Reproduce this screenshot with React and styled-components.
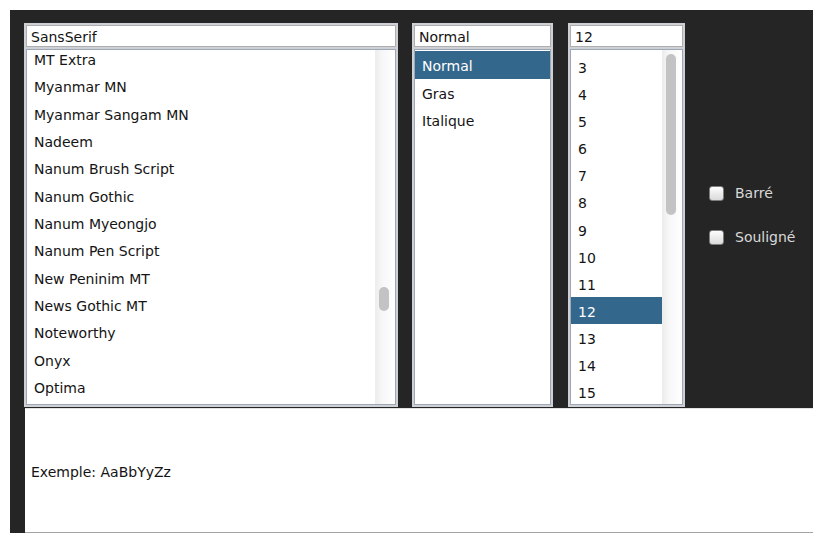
import React from 'react';
import styled, { createGlobalStyle } from 'styled-components';

const GlobalStyle = createGlobalStyle`
  html, body {
    margin: 0;
    padding: 0;
    background: #fff;
  }
  body {
    font-family: "DejaVu Sans", Verdana, sans-serif;
    font-size: 14px;
  }
`;

const Page = styled.div`
  height: 533px;
  padding: 10px 0 0 10px;
  box-sizing: border-box;
  overflow: hidden;
`;

const Panel = styled.div`
  height: 523px;
  box-sizing: border-box;
  padding: 13px 0 0 14px;
  background: #252525;
  display: flex;
  flex-direction: column;
`;

const Controls = styled.div`
  display: flex;
  height: 384px;
  flex-shrink: 0;
`;

const Column = styled.div`
  width: ${p => p.$width}px;
  margin-right: ${p => p.$gap}px;
  flex-shrink: 0;
  box-sizing: border-box;
  padding: 2px;
  background: #cdd0d5;
  display: flex;
  flex-direction: column;
  gap: 2px;
`;

const Field = styled.div`
  height: 22px;
  box-sizing: border-box;
  padding: 0 4px;
  background: #fff;
  border: 1px solid #aeaeae;
  line-height: 23px;
  color: #141414;
`;

const List = styled.div`
  flex: 1;
  min-height: 0;
  display: flex;
  overflow: hidden;
  background: #fff;
  border: 1px solid #9ea7b3;
`;

// margin-top stands in for the list's scroll position
const Rows = styled.div`
  flex: 1;
  margin-top: ${p => p.$offset}px;
`;

const Row = styled.div`
  height: ${p => p.$h}px;
  line-height: 30px;
  padding-left: 7px;
  white-space: nowrap;
  color: ${p => (p.$selected ? '#fff' : '#141414')};
  background: ${p => (p.$selected ? '#34678c' : 'transparent')};
`;

const Track = styled.div`
  width: 20px;
  flex-shrink: 0;
  background: linear-gradient(to right, #ececec, #f7f7f7 35%, #fff);
`;

const Thumb = styled.div`
  width: 10px;
  height: ${p => p.$height}px;
  margin: ${p => p.$top}px 0 0 4px;
  border-radius: 5px;
  background: #c3c3c3;
`;

const Options = styled.div`
  display: flex;
  flex-direction: column;
  justify-content: center;
  gap: 29px;
`;

const Option = styled.label`
  display: flex;
  align-items: center;
  gap: 11px;
  height: 15px;
  color: #d8d8d8;
`;

const Box = styled.span`
  width: 15px;
  height: 15px;
  box-sizing: border-box;
  border: 1px solid #7d7d7d;
  border-radius: 3px;
  background: linear-gradient(#fdfdfd, #dadada);
`;

const Preview = styled.div`
  flex: 1;
  margin: 1px 0 0 1px;
  padding: 2px 0 0 6px;
  display: flex;
  align-items: center;
  background: #fff;
  border-top: 1px solid #e2e2e2;
  border-bottom: 1px solid #a3a3a3;
  color: #141414;
`;

const fonts = [
  'MT Extra',
  'Myanmar MN',
  'Myanmar Sangam MN',
  'Nadeem',
  'Nanum Brush Script',
  'Nanum Gothic',
  'Nanum Myeongjo',
  'Nanum Pen Script',
  'New Peninim MT',
  'News Gothic MT',
  'Noteworthy',
  'Onyx',
  'Optima',
  'Oriya MN',
];

const styles = ['Normal', 'Gras', 'Italique'];

const sizes = [3, 4, 5, 6, 7, 8, 9, 10, 11, 12, 13, 14, 15, 16];

const App = () => {
  return (
    <Page>
      <GlobalStyle />
      <Panel>
        <Controls>
          <Column $width={374} $gap={14}>
            <Field>SansSerif</Field>
            <List>
              <Rows $offset={-5}>
                {fonts.map(f => (
                  <Row key={f} $h={27.33}>{f}</Row>
                ))}
              </Rows>
              <Track>
                <Thumb $top={237} $height={24} />
              </Track>
            </List>
          </Column>

          <Column $width={141} $gap={15}>
            <Field>Normal</Field>
            <List>
              <Rows $offset={1}>
                {styles.map(s => (
                  <Row key={s} $h={27.6} $selected={s === 'Normal'}>{s}</Row>
                ))}
              </Rows>
            </List>
          </Column>

          <Column $width={117} $gap={24}>
            <Field>12</Field>
            <List>
              <Rows $offset={3}>
                {sizes.map(n => (
                  <Row key={n} $h={27.1} $selected={n === 12}>{n}</Row>
                ))}
              </Rows>
              <Track>
                <Thumb $top={4} $height={161} />
              </Track>
            </List>
          </Column>

          <Options>
            <Option><Box />Barré</Option>
            <Option><Box />Souligné</Option>
          </Options>
        </Controls>

        <Preview>Exemple: AaBbYyZz</Preview>
      </Panel>
    </Page>
  );
};

export default App;
